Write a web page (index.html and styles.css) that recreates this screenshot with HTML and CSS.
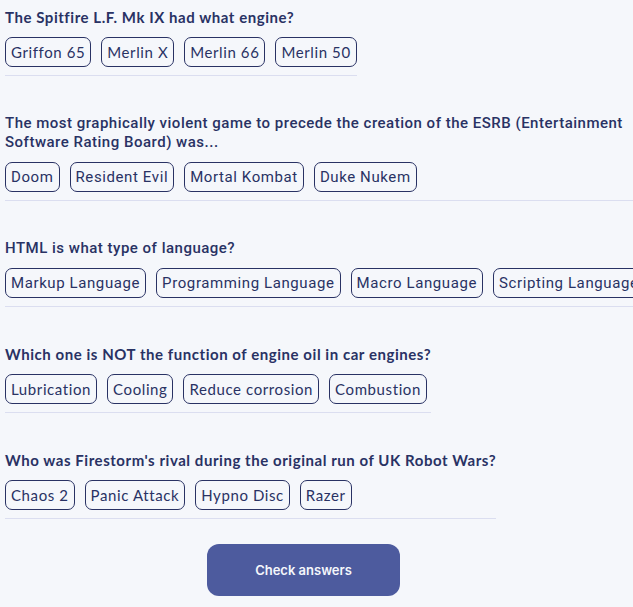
FILE: index.html
```html
<!DOCTYPE html>
<html>
<head>
<meta charset="utf-8">
<link rel="stylesheet" href="styles.css">
</head>
<body>
<main class="quiz">
  <section class="question">
    <h2 class="q-text">The Spitfire L.F. Mk IX had what engine?</h2>
    <div class="options">
      <button class="opt">Griffon 65</button>
      <button class="opt">Merlin X</button>
      <button class="opt">Merlin 66</button>
      <button class="opt">Merlin 50</button>
    </div>
  </section>
  <section class="question alt">
    <h2 class="q-text">The most graphically violent game to precede the creation of the ESRB (Entertainment Software Rating Board) was...</h2>
    <div class="options">
      <button class="opt">Doom</button>
      <button class="opt">Resident Evil</button>
      <button class="opt">Mortal Kombat</button>
      <button class="opt">Duke Nukem</button>
    </div>
  </section>
  <section class="question alt">
    <h2 class="q-text">HTML is what type of language?</h2>
    <div class="options">
      <button class="opt">Markup Language</button>
      <button class="opt">Programming Language</button>
      <button class="opt">Macro Language</button>
      <button class="opt">Scripting Language</button>
    </div>
  </section>
  <section class="question">
    <h2 class="q-text">Which one is NOT the function of engine oil in car engines?</h2>
    <div class="options">
      <button class="opt">Lubrication</button>
      <button class="opt">Cooling</button>
      <button class="opt">Reduce corrosion</button>
      <button class="opt">Combustion</button>
    </div>
  </section>
  <section class="question">
    <h2 class="q-text">Who was Firestorm's rival during the original run of UK Robot Wars?</h2>
    <div class="options">
      <button class="opt">Chaos 2</button>
      <button class="opt">Panic Attack</button>
      <button class="opt">Hypno Disc</button>
      <button class="opt">Razer</button>
    </div>
  </section>
  <div class="actions">
    <button class="check">Check answers</button>
  </div>
</main>
</body>
</html>
```

FILE: styles.css
```css
html, body {
  margin: 0;
  padding: 0;
  overflow: hidden;
  background: #F5F7FB;
}
body {
  color: #293264;
  font-family: "Lato", "Open Sans", sans-serif;
}
.quiz {
  padding: 8px 0 0 5px;
  display: flex;
  flex-direction: column;
  align-items: flex-start;
}
.question {
  width: fit-content;
  max-width: 628px;
  border-bottom: 1px solid #DBDEF0;
  padding-bottom: 8px;
  margin-bottom: 38px;
}
.q-text {
  margin: 0;
  font-size: 15px;
  line-height: 19px;
  font-weight: 700;
  letter-spacing: 0.55px;
}
.options {
  display: flex;
  gap: 10px;
  margin-top: 10px;
  white-space: nowrap;
}
.opt {
  flex: none;
  height: 30px;
  padding: 0 5px;
  border: 1px solid #293264;
  border-radius: 7px;
  background: transparent;
  color: #293264;
  font-family: "Lato", "Open Sans", sans-serif;
  font-size: 15px;
  letter-spacing: 0.6px;
}
.alt .q-text,
.alt .opt {
  font-family: "Roboto", sans-serif;
}
.alt .q-text {
  font-weight: 500;
  letter-spacing: 0.5px;
}
.actions {
  margin-top: -13px;
  padding-left: 202px;
}
.check {
  width: 193px;
  height: 52px;
  border: none;
  border-radius: 12px;
  background: #4D5B9E;
  color: #F5F7FB;
  font-family: "Inter", sans-serif;
  font-weight: 600;
  font-size: 13px;
}
```
